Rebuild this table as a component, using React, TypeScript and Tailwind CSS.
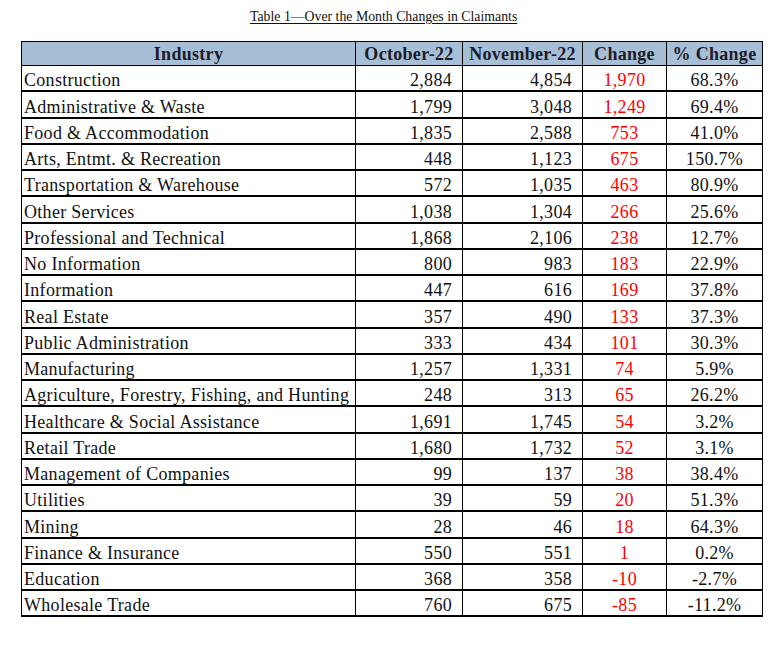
const rows: [string, string, string, string, string][] = [
  ["Construction", "2,884", "4,854", "1,970", "68.3%"],
  ["Administrative & Waste", "1,799", "3,048", "1,249", "69.4%"],
  ["Food & Accommodation", "1,835", "2,588", "753", "41.0%"],
  ["Arts, Entmt. & Recreation", "448", "1,123", "675", "150.7%"],
  ["Transportation & Warehouse", "572", "1,035", "463", "80.9%"],
  ["Other Services", "1,038", "1,304", "266", "25.6%"],
  ["Professional and Technical", "1,868", "2,106", "238", "12.7%"],
  ["No Information", "800", "983", "183", "22.9%"],
  ["Information", "447", "616", "169", "37.8%"],
  ["Real Estate", "357", "490", "133", "37.3%"],
  ["Public Administration", "333", "434", "101", "30.3%"],
  ["Manufacturing", "1,257", "1,331", "74", "5.9%"],
  ["Agriculture, Forestry, Fishing, and Hunting", "248", "313", "65", "26.2%"],
  ["Healthcare & Social Assistance", "1,691", "1,745", "54", "3.2%"],
  ["Retail Trade", "1,680", "1,732", "52", "3.1%"],
  ["Management of Companies", "99", "137", "38", "38.4%"],
  ["Utilities", "39", "59", "20", "51.3%"],
  ["Mining", "28", "46", "18", "64.3%"],
  ["Finance & Insurance", "550", "551", "1", "0.2%"],
  ["Education", "368", "358", "-10", "-2.7%"],
  ["Wholesale Trade", "760", "675", "-85", "-11.2%"],
];

const cols = "grid grid-cols-[333px_107px_120px_84px_96px]";

export default function App() {
  return (
    <div className="h-[648px] w-[784px] bg-white font-['Liberation_Serif',serif] text-[#111]">
      <div className="h-[41px] pl-[250px] pt-[9px] text-[13.8px] leading-[16px]">
        <span className="underline underline-offset-2">Table 1—Over the Month Changes in Claimants</span>
      </div>
      <div className="ml-[21px] w-[742px] border-x border-t border-black font-['Liberation_Serif',serif] text-[18px] leading-[20px] tracking-[0.3px]">
        <div className={`${cols} h-[24px] border-b border-black bg-[#a6bfd6] font-bold text-[#1c1c28]`}>
          <div className="flex items-end justify-center pb-[1px]">Industry</div>
          <div className="flex items-end justify-center border-l border-black pb-[1px]">October-22</div>
          <div className="flex items-end justify-center border-l border-black pb-[1px]">November-22</div>
          <div className="flex items-end justify-center border-l border-black pb-[1px]">Change</div>
          <div className="flex items-end justify-center border-l border-black pb-[1px]">% Change</div>
        </div>
        {rows.map(([name, oct, nov, change, pct]) => (
          <div key={name} className={`${cols} h-[26.25px] border-b-2 border-black`}>
            <div className="flex items-end whitespace-nowrap pl-[2px]">{name}</div>
            <div className="flex items-end justify-end border-l border-black pr-[10px]">{oct}</div>
            <div className="flex items-end justify-end border-l border-black pr-[10px]">{nov}</div>
            <div className="flex items-end justify-center border-l border-black text-[#ff0000]">{change}</div>
            <div className="flex items-end justify-center border-l border-black">{pct}</div>
          </div>
        ))}
      </div>
    </div>
  );
}
